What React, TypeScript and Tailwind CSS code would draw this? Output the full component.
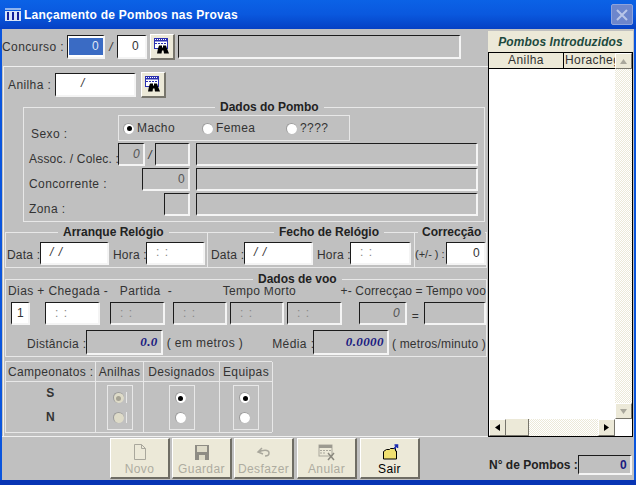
import React from "react";

const sunken =
  "border-t border-l border-r-2 border-b-2 border-t-[#1c1c1c] border-l-[#1c1c1c] border-r-[#f4f4f4] border-b-[#f4f4f4]";

interface BoxProps {
  className?: string;
  children?: React.ReactNode;
}

// campo branco editavel
const Input: React.FC<BoxProps> = ({ className, children }) => (
  <div className={`${sunken} bg-white flex items-center text-[#333] ${className}`}>{children}</div>
);

// campo cinzento, so leitura
const Display: React.FC<BoxProps> = ({ className, children }) => (
  <div className={`${sunken} bg-[#c0c0c0] flex items-center text-[#555] ${className}`}>{children}</div>
);

const Radio: React.FC<{ checked?: boolean; disabled?: boolean }> = ({ checked, disabled }) => (
  <span
    className={`w-[11px] h-[11px] rounded-full shrink-0 flex items-center justify-center border-t border-l border-[#9a9a9a] ${
      disabled ? "bg-[#dedbc8]" : "bg-white"
    }`}
  >
    {checked && <span className={`w-[5px] h-[5px] rounded-full ${disabled ? "bg-[#a5a294]" : "bg-black"}`} />}
  </span>
);

const Legend: React.FC<BoxProps> = ({ className, children }) => (
  <span className={`absolute top-[-8px] bg-[#c0c0c0] px-[5px] h-[15px] leading-[15px] font-bold tracking-normal whitespace-nowrap text-[#222] ${className}`}>
    {children}
  </span>
);

const FindIcon = () => (
  <svg width="18" height="18" viewBox="0 0 18 18">
    <rect x="1.5" y="1.5" width="13" height="10" fill="#fff" stroke="#2a30b0" />
    <rect x="1" y="1" width="14" height="3.5" fill="#2a30b0" />
    <path d="M2 2.5h12" stroke="#fff" strokeDasharray="1 1" />
    <path d="M2 6.5h12" stroke="#2a30b0" strokeDasharray="2 1" />
    <path d="M6 8.5h3v2h1v-2h3l1 3 2 5h-5l-.5-3h-1.5l-.5 3H4l1-5z" fill="#000" />
  </svg>
);

const FindButton: React.FC<{ className?: string }> = ({ className }) => (
  <div
    className={`w-[25px] h-[26px] bg-[#ece9d8] border-t border-l border-r-2 border-b-2 border-t-white border-l-white border-r-[#77756c] border-b-[#77756c] flex items-center justify-center ${className}`}
  >
    <FindIcon />
  </div>
);

const ActionButton: React.FC<{ label: string; disabled?: boolean; children: React.ReactNode }> = ({
  label,
  disabled,
  children,
}) => (
  <div
    className={`w-[60px] h-[41px] bg-[#ece9d8] border-t border-l border-r-2 border-b-2 border-t-white border-l-white border-r-[#6f6d64] border-b-[#6f6d64] flex flex-col items-center pt-[3px] ${
      disabled ? "text-[#aeaca0]" : "text-black"
    }`}
  >
    <span className="h-[20px] flex items-center justify-center">{children}</span>
    <span className="leading-[14px]">{label}</span>
  </div>
);

const ScrollButton: React.FC<{ d: string; color?: string; className?: string }> = ({ d, color = "#000", className }) => (
  <div
    className={`bg-[#ece9d8] border-t border-l border-r border-b border-t-white border-l-white border-r-[#77756c] border-b-[#77756c] flex items-center justify-center shrink-0 ${className}`}
  >
    <svg width="9" height="9" viewBox="0 0 9 9">
      <path d={d} fill={color} />
    </svg>
  </div>
);

const track = "bg-[repeating-conic-gradient(#ece9d8_0_25%,#ffffff_0_50%)] bg-[length:2px_2px]";

export default function App() {
  return (
    <div className="w-[636px] h-[485px] flex flex-col bg-[#0a55dd] overflow-hidden text-[12px] tracking-[0.4px] text-[#333] font-['Liberation_Sans',Arial,sans-serif]">
      {/* barra de titulo */}
      <div className="h-[29px] shrink-0 flex items-center pl-[5px] pr-[3px] bg-gradient-to-b from-[#0b62e6] via-[#0a58de] to-[#0640c4]">
        <svg width="16" height="13" viewBox="0 0 16 13" className="shrink-0">
          <rect x="0" y="0" width="16" height="2" fill="#8fb4ee" />
          <rect x="0" y="3" width="16" height="10" fill="#d8e4f8" />
          <rect x="2" y="4" width="2" height="8" fill="#12209a" />
          <rect x="7" y="4" width="2" height="8" fill="#12209a" />
          <rect x="12" y="4" width="2" height="8" fill="#12209a" />
        </svg>
        <span className="ml-[3px] text-white font-bold text-[12px] tracking-[0.25px]">Lançamento de Pombos nas Provas</span>
        <div className="ml-auto w-[22px] h-[21px] rounded-[2px] bg-[#6d86cc] border border-[#8ea3dc] flex items-center justify-center">
          <svg width="14" height="14" viewBox="0 0 14 14">
            <path d="M2 2l10 10M12 2L2 12" stroke="#b9c6e8" strokeWidth="2" />
          </svg>
        </div>
      </div>

      <div className="h-[451px] shrink-0 mx-[2px] flex bg-[#c0c0c0]">
        {/* coluna esquerda */}
        <div className="w-[486px] shrink-0 flex flex-col">
          <div className="h-[37px] pb-[2px] flex items-center shrink-0">
            <span className="w-[65px]">Concurso :</span>
            <Input className="w-[38px] h-[24px] justify-end">
              <span className="bg-[#3a6bc4] text-[#dfe6f5] w-[34px] h-[17px] text-right pr-[4px] leading-[17px]">0</span>
            </Input>
            <span className="w-[12px] text-center italic">/</span>
            <Input className="w-[30px] h-[24px] justify-end pr-[6px]">0</Input>
            <FindButton className="ml-[3px]" />
            <Display className="ml-[3px] w-[283px] h-[24px]" />
          </div>

          <div className="ml-[1px] border-t border-l border-[#f0f0f0] flex flex-col h-[370px] shrink-0">
            <div className="mt-[5px] h-[25px] flex items-center shrink-0">
              <span className="ml-[4px] w-[47px]">Anilha :</span>
              <Input className="w-[81px] h-[24px] pl-[25px] pb-[3px] italic">/</Input>
              <FindButton className="ml-[5px]" />
            </div>

            {/* dados do pombo */}
            <div className="relative mt-[10px] ml-[19px] w-[462px] h-[115px] shrink-0 border border-[#e8e8e8] pt-[7px]">
              <Legend className="left-[191px]">Dados do Pombo</Legend>
              <div className="flex h-[26px]">
                <span className="ml-[7px] w-[87px] pt-[10px]">Sexo :</span>
                <div className="w-[232px] border border-[#e8e8e8] flex items-center pl-[4px]">
                  <Radio checked />
                  <span className="ml-[3px] w-[65px]">Macho</span>
                  <Radio />
                  <span className="ml-[3px] w-[70px]">Femea</span>
                  <Radio />
                  <span className="ml-[3px]">????</span>
                </div>
              </div>
              <div className="flex items-center h-[23px] mt-[2px]">
                <span className="ml-[5px] w-[89px] whitespace-nowrap tracking-[0.2px] pt-[8px]">Assoc. / Colec. :</span>
                <Display className="w-[27px] h-[23px] justify-end pr-[3px] italic">0</Display>
                <span className="w-[10px] text-center italic">/</span>
                <Display className="w-[35px] h-[23px]" />
                <Display className="ml-[6px] w-[282px] h-[23px]" />
              </div>
              <div className="flex items-center h-[23px] mt-[2px]">
                <span className="ml-[5px] w-[113px] pt-[8px]">Concorrente :</span>
                <Display className="w-[48px] h-[23px] justify-end pr-[3px]">0</Display>
                <Display className="ml-[6px] w-[282px] h-[23px]" />
              </div>
              <div className="flex items-center h-[23px] mt-[2px]">
                <span className="ml-[5px] w-[135px] pt-[9px]">Zona :</span>
                <Display className="w-[26px] h-[23px]" />
                <Display className="ml-[6px] w-[282px] h-[23px]" />
              </div>
            </div>

            {/* relogios */}
            <div className="mt-[10px] ml-[1px] flex h-[36px] shrink-0 whitespace-nowrap">
              <div className="relative w-[203px] border border-[#e8e8e8] flex pt-[9px]">
                <Legend className="left-[52px]">Arranque Relógio</Legend>
                <span className="w-[34px] pl-[1px] pt-[4px] tracking-[0.2px]">Data :</span>
                <Input className="w-[69px] h-[23px] pl-[9px] pb-[3px] italic tracking-[1px]">/ /</Input>
                <span className="w-[37px] pl-[4px] pt-[4px] tracking-[0.2px]">Hora :</span>
                <Input className="w-[59px] h-[23px] pl-[9px] pb-[3px] tracking-[1px] text-[#888]">: :</Input>
              </div>
              <div className="relative w-[207px] border-y border-r border-[#e8e8e8] flex pt-[9px]">
                <Legend className="left-[66px]">Fecho de Relógio</Legend>
                <span className="w-[36px] pl-[3px] pt-[4px] tracking-[0.2px]">Data :</span>
                <Input className="w-[69px] h-[23px] pl-[9px] pb-[3px] italic tracking-[1px]">/ /</Input>
                <span className="w-[37px] pl-[4px] pt-[4px] tracking-[0.2px]">Hora :</span>
                <Input className="w-[61px] h-[23px] pl-[9px] pb-[3px] tracking-[1px] text-[#888]">: :</Input>
              </div>
              <div className="relative w-[72px] border-y border-r border-[#e8e8e8] flex pt-[9px]">
                <Legend className="left-[3px] !px-[4px]">Correcção</Legend>
                <span className="w-[31px] pt-[4px] text-[11px] tracking-normal">(+/- ) :</span>
                <Input className="w-[40px] h-[23px] justify-end pr-[4px]">0</Input>
              </div>
            </div>

            {/* dados de voo */}
            <div className="relative mt-[11px] ml-[1px] w-[482px] h-[78px] shrink-0 border border-[#e8e8e8]">
              <Legend className="left-[247px]">Dados de voo</Legend>
              <div className="flex mt-[4px] h-[14px] leading-[14px] whitespace-nowrap">
                <span className="ml-[2px] w-[112px]">Dias + Chegada -</span>
                <span className="w-[48px]">Partida</span>
                <span className="w-[55px]">-</span>
                <span className="w-[118px] tracking-[0.3px]">Tempo Morto</span>
                <span className="tracking-[0.15px]">+- Correcçao = Tempo voo</span>
              </div>
              <div className="flex items-center mt-[4px] h-[23px]">
                <Input className="ml-[5px] w-[19px] h-[23px] pl-[5px]">1</Input>
                <Input className="ml-[15px] w-[55px] h-[23px] pl-[9px] tracking-[1px] text-[#888]">: :</Input>
                <Display className="ml-[10px] w-[55px] h-[23px] pl-[9px] tracking-[1px] text-[#888]">: :</Display>
                <Display className="ml-[8px] w-[54px] h-[23px] pl-[9px] tracking-[1px] text-[#888]">: :</Display>
                <Display className="ml-[3px] w-[54px] h-[23px] pl-[9px] tracking-[1px] text-[#888]">: :</Display>
                <Display className="ml-[3px] w-[55px] h-[23px] pl-[9px] tracking-[1px] text-[#888]">: :</Display>
                <Display className="ml-[17px] w-[48px] h-[23px] justify-end pr-[5px] italic">0</Display>
                <span className="w-[17px] text-center pt-[4px]">=</span>
                <Display className="w-[62px] h-[23px]" />
              </div>
              <div className="flex items-center mt-[5px] h-[25px] whitespace-nowrap">
                <span className="ml-[21px] w-[59px] tracking-[0.3px] pt-[3px]">Distância :</span>
                <Display className="w-[77px] h-[25px] justify-end pr-[3px] font-['Liberation_Serif',serif] italic font-bold text-[13px] !text-[#1a1a80]">
                  0.0
                </Display>
                <span className="ml-[4px] w-[106px]">( em metros )</span>
                <span className="w-[41px] pt-[2px]">Média :</span>
                <Display className="w-[76px] h-[25px] justify-end pr-[3px] font-['Liberation_Serif',serif] italic font-bold text-[13px] !text-[#1a1a80]">
                  0.0000
                </Display>
                <span className="ml-[3px] pt-[2px] tracking-[0.2px]">( metros/minuto )</span>
              </div>
            </div>

            {/* campeonatos */}
            <div className="mt-[4px] ml-[1px] w-[267px] h-[72px] shrink-0 grid grid-cols-[90px_48px_76px_53px] grid-rows-[20px_50px] border-t border-l border-b border-[#e8e8e8] whitespace-nowrap">
              <div className="border-r border-b border-[#e8e8e8] flex items-center pl-[2px] tracking-[0.3px]">Campeonatos :</div>
              <div className="border-r border-b border-[#e8e8e8] flex items-center justify-center tracking-[0.3px]">Anilhas</div>
              <div className="border-r border-b border-[#e8e8e8] flex items-center justify-center tracking-[0.3px]">Designados</div>
              <div className="border-r border-b border-[#e8e8e8] flex items-center justify-center">Equipas</div>
              <div className="border-r border-[#e8e8e8] flex flex-col items-center pt-[4px] font-bold gap-[10px] leading-[14px]">
                <span>S</span>
                <span>N</span>
              </div>
              <div className="border-r border-[#e8e8e8] flex justify-center pt-[3px]">
                <div className="w-[26px] h-[45px] border border-[#e8e8e8] flex flex-col items-start pl-[5px] pt-[6px] gap-[9px]">
                  <span className="flex items-center gap-[2px]">
                    <Radio checked disabled />
                    <span className="w-px h-[11px] bg-[#e8e8e8]" />
                  </span>
                  <span className="flex items-center gap-[2px]">
                    <Radio disabled />
                    <span className="w-px h-[11px] bg-[#e8e8e8]" />
                  </span>
                </div>
              </div>
              <div className="border-r border-[#e8e8e8] flex justify-center pt-[3px]">
                <div className="w-[26px] h-[45px] border border-[#e8e8e8] flex flex-col items-start pl-[5px] pt-[6px] gap-[9px]">
                  <Radio checked />
                  <Radio />
                </div>
              </div>
              <div className="border-r border-[#e8e8e8] flex justify-center pt-[3px]">
                <div className="w-[26px] h-[45px] border border-[#e8e8e8] flex flex-col items-start pl-[5px] pt-[6px] gap-[9px]">
                  <Radio checked />
                  <Radio />
                </div>
              </div>
            </div>
          </div>

          {/* botoes */}
          <div className="border-t border-[#f0f0f0] pt-[1px] pl-[108px] flex">
            <ActionButton label="Novo" disabled>
              <svg width="16" height="18" viewBox="0 0 16 18" fill="none" stroke="#a9a79c">
                <path d="M2.5 1.5h7l4 4v11h-11zM9.5 1.5v4h4" />
              </svg>
            </ActionButton>
            <div className="ml-[2px]">
              <ActionButton label="Guardar" disabled>
                <svg width="16" height="17" viewBox="0 0 16 17">
                  <rect x="1" y="1" width="14" height="15" fill="#8e8c84" />
                  <rect x="3" y="2" width="10" height="6" fill="#dedbc8" />
                  <rect x="5" y="11" width="6" height="5" fill="#dedbc8" />
                </svg>
              </ActionButton>
            </div>
            <div className="ml-[2px]">
              <ActionButton label="Desfazer" disabled>
                <svg width="16" height="12" viewBox="0 0 16 12" fill="none" stroke="#a9a79c" strokeWidth="1.5">
                  <path d="M6 2L2 6l5 2M2.5 6C6 4 13 3 13 7c0 2-2 3-4 3" />
                </svg>
              </ActionButton>
            </div>
            <div className="ml-[3px]">
              <ActionButton label="Anular" disabled>
                <svg width="18" height="17" viewBox="0 0 18 17">
                  <rect x="1" y="1" width="13" height="11" fill="none" stroke="#a9a79c" />
                  <rect x="1" y="1" width="13" height="3" fill="#9c9a90" />
                  <path d="M2 6.5h11M2 9h6" stroke="#a9a79c" strokeDasharray="2 1" />
                  <path d="M10 9l6 7M16 9l-6 7" stroke="#8a887e" strokeWidth="1.5" />
                </svg>
              </ActionButton>
            </div>
            <div className="ml-[3px]">
              <ActionButton label="Sair">
                <svg width="18" height="18" viewBox="0 0 18 18">
                  <path d="M2.5 8.5l3-2h3l1-1h5v2.500h1v8h-13z" fill="#f0e070" stroke="#000" />
                  <path d="M13 6l3-4M13.500 2h3v3" fill="none" stroke="#1a2ab0" strokeWidth="1.500" />
                </svg>
              </ActionButton>
            </div>
          </div>
        </div>

        {/* coluna direita */}
        <div className="flex-1 min-w-0 flex flex-col pt-[2px]">
          <div className="w-[145px] h-[21px] shrink-0 bg-[#ece9d8] flex items-center justify-center font-bold italic tracking-[0.1px] text-[#1d4a3e]">
            Pombos Introduzidos
          </div>
          <div className="w-[145px] h-[385px] shrink-0 border border-black bg-white flex flex-col">
            <div className="flex-1 min-h-0 flex">
              <div className="flex-1 min-w-0">
                <div className="h-[16px] flex bg-[#ece9d8] border-b border-black leading-[15px] overflow-hidden">
                  <div className="w-[75px] border-r border-black text-center">Anilha</div>
                  <div className="flex-1 pl-px overflow-hidden whitespace-nowrap">Horachegada</div>
                </div>
              </div>
              <div className={`w-[17px] shrink-0 flex flex-col justify-between ${track}`}>
                <ScrollButton d="M4.5 2L8 7H1z" color="#a9a79c" className="h-[16px]" />
                <ScrollButton d="M4.5 7L8 2H1z" color="#a9a79c" className="h-[16px]" />
              </div>
            </div>
            <div className="h-[17px] shrink-0 flex">
              <ScrollButton d="M2 4.5L7 1v7z" className="w-[17px]" />
              <div className={`flex-1 ${track}`}>
                <div className="w-[23px] h-full bg-[#ece9d8] border-r border-b border-[#77756c]" />
              </div>
              <ScrollButton d="M7 4.5L2 1v7z" className="w-[17px]" />
              <div className="w-[17px] bg-white" />
            </div>
          </div>
          <div className="mt-[18px] flex items-center h-[20px] whitespace-nowrap">
            <span className="w-[90px] pl-px font-bold tracking-normal text-[#222]">N° de Pombos :</span>
            <div className={`${sunken} w-[54px] h-[20px] bg-[#c0c0c0] flex items-center justify-end pr-[3px] font-bold text-[#1a1a80]`}>
              0
            </div>
          </div>
        </div>
      </div>
      <div className="flex-1 bg-[#0835b4]" />
    </div>
  );
}
